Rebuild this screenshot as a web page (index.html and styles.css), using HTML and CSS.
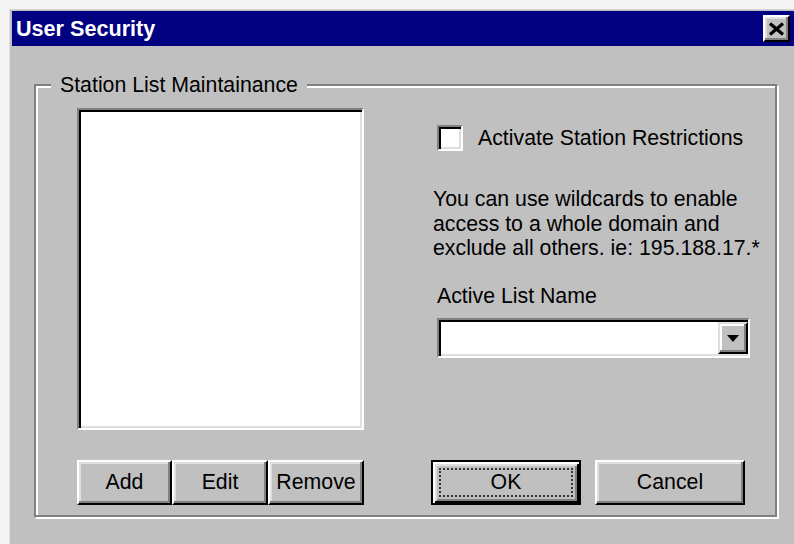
FILE: index.html
```html
<!DOCTYPE html>
<html lang="en">
<head>
<meta charset="utf-8">
<title>User Security</title>
<link rel="stylesheet" href="styles.css">
</head>
<body>
<div class="window">
  <div class="titlebar">
    <span class="title">User Security</span>
    <button class="close" aria-label="Close">
      <svg width="17" height="14" viewBox="0 0 17 14">
        <path d="M2 1.5 L15 12.5 M15 1.5 L2 12.5" stroke="#000" stroke-width="3.2" fill="none"/>
      </svg>
    </button>
  </div>
  <div class="client">
    <fieldset class="group">
      <legend>Station List Maintainance</legend>
      <div class="group-body">
        <div class="col-left">
          <div class="listbox"></div>
          <div class="btn-row">
            <button class="btn seg seg-add">Add</button>
            <button class="btn seg">Edit</button>
            <button class="btn seg">Remove</button>
          </div>
        </div>
        <div class="col-right">
          <label class="check">
            <span class="checkbox"></span>
            <span class="check-text">Activate Station Restrictions</span>
          </label>
          <p class="hint">You can use wildcards to enable<br>access to a whole domain and<br>exclude all others. ie: 195.188.17.*</p>
          <div class="field-label">Active List Name</div>
          <div class="combo">
            <span class="combo-btn"><span class="arrow"></span></span>
          </div>
          <div class="btn-row actions">
            <button class="btn default"><span class="focus">OK</span></button>
            <button class="btn">Cancel</button>
          </div>
        </div>
      </div>
    </fieldset>
  </div>
</div>
</body>
</html>
```

FILE: styles.css
```css
html, body {
  margin: 0;
  height: 544px;
  overflow: hidden;
}

body {
  background: #f4f4f4;
  font-family: "Liberation Sans", Arial, sans-serif;
  font-size: 21.3px;
  color: #000;
}

/* dialog frame */
.window {
  margin: 9px 0 0 9px;
  width: 782px;
  height: 533px;
  background: #c0c0c0;
  border-top: 1px solid #d2d2d2;
  border-left: 1px solid #e2e2e2;
  padding: 1px 0 0 2px;
}

.titlebar {
  height: 35px;
  background: #000080;
  display: flex;
  align-items: center;
}

.title {
  flex: 1;
  padding-left: 4px;
  color: #fff;
  font-weight: bold;
  font-size: 21.6px;
  line-height: 35px;
}

.close {
  width: 27px;
  height: 27px;
  margin-right: 4px;
  padding: 0;
  background: #c0c0c0;
  border: 2px solid;
  border-color: #fff #000 #000 #fff;
  box-shadow: inset -2px -2px 0 #808080, inset 2px 2px 0 #dfdfdf;
  display: flex;
  align-items: center;
  justify-content: center;
}

.close svg {
  display: block;
}

.client {
  padding-top: 27px;
}

/* etched group box */
.group {
  margin: 0 0 0 22px;
  padding: 0;
  width: 743px;
  box-sizing: border-box;
  min-width: 0;
  border: 2px solid #808080;
  box-shadow: inset 2px 2px 0 #fff, 2px 2px 0 #fff;
}

.group legend {
  margin-left: 15px;
  padding: 0 9px;
  line-height: 24px;
  background: #c0c0c0;
}

.group-body {
  display: flex;
  padding: 11px 0 10px 41px;
}

.col-left {
  width: 287px;
  display: flex;
  flex-direction: column;
}

.col-right {
  width: 321px;
  margin-left: 67px;
  display: flex;
  flex-direction: column;
}

/* sunken white fields */
.listbox,
.checkbox,
.combo {
  background: #fff;
  border: 2px solid;
  border-color: #808080 #fff #fff #808080;
  box-shadow: inset 2px 2px 0 #000, inset -2px -2px 0 #dfdfdf;
  box-sizing: border-box;
}

.listbox {
  height: 322px;
}

/* raised push buttons */
.btn {
  font: inherit;
  color: #000;
  height: 45px;
  padding: 0;
  background: #c0c0c0;
  border: 2px solid;
  border-color: #fff #000 #000 #fff;
  box-shadow: inset -2px -2px 0 #808080, inset 2px 2px 0 #dfdfdf;
  box-sizing: border-box;
}

.btn-row {
  display: flex;
  margin-top: 30px;
}

.seg {
  width: 96px;
}

.seg-add {
  width: 95px;
}

.check {
  display: flex;
  align-items: center;
  height: 26px;
  margin: 17px 0 0 6px;
}

.checkbox {
  width: 26px;
  height: 26px;
}

.check-text {
  margin-left: 15px;
  line-height: 26px;
  white-space: nowrap;
}

.hint {
  margin: 36px 0 0 2px;
  line-height: 24.5px;
  white-space: nowrap;
}

.field-label {
  margin: 23px 0 0 6px;
  line-height: 24.5px;
}

.combo {
  margin: 10px 0 0 6px;
  width: 313px;
  height: 40px;
  padding: 2px 0 2px 0;
  display: flex;
  justify-content: flex-end;
}

.combo-btn {
  width: 30px;
  height: 32px;
  background: #c0c0c0;
  border: 2px solid;
  border-color: #dfdfdf #000 #000 #dfdfdf;
  box-shadow: inset -2px -2px 0 #808080, inset 2px 2px 0 #fff;
  box-sizing: border-box;
  display: flex;
  align-items: center;
  justify-content: center;
}

.arrow {
  width: 0;
  height: 0;
  border-left: 6px solid transparent;
  border-right: 6px solid transparent;
  border-top: 7px solid #000;
  margin-top: 1px;
}

.actions {
  margin-top: auto;
  gap: 14px;
}

.actions .btn {
  width: 150px;
}

.btn.default {
  border: 2px solid #000;
  box-shadow: inset 2px 2px 0 #fff, inset -2px -2px 0 #000, inset 4px 4px 0 #dfdfdf, inset -4px -4px 0 #808080;
  padding: 6px 6px;
  display: flex;
}

.focus {
  flex: 1;
  border: 2px dotted #333;
  display: flex;
  align-items: center;
  justify-content: center;
}
```
